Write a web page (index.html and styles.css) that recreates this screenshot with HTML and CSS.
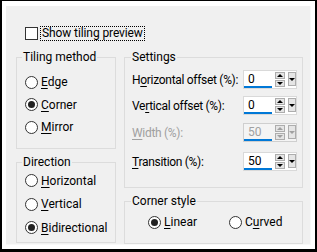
FILE: index.html
```html
<!DOCTYPE html>
<html lang="en">
<head>
  <meta charset="UTF-8" />
  <title>Tiling</title>
  <link rel="stylesheet" href="styles.css">
</head>
<body>

  <div class="panel">

    <!-- Preview toggle -->
    <div class="preview-row">
      <span class="check"></span>
      <span class="focus">Show tiling preview</span>
    </div>

    <div class="groups">

      <!-- Left side -->
      <div class="left-column">
        <fieldset class="group method">
          <legend>Tiling method</legend>
          <div class="radio"><span class="circle"></span><span><u>E</u>dge</span></div>
          <div class="radio"><span class="circle checked"></span><span><u>C</u>orner</span></div>
          <div class="radio"><span class="circle"></span><span><u>M</u>irror</span></div>
        </fieldset>

        <fieldset class="group direction">
          <legend>Direction</legend>
          <div class="radio"><span class="circle"></span><span><u>H</u>orizontal</span></div>
          <div class="radio"><span class="circle"></span><span><u>V</u>ertical</span></div>
          <div class="radio"><span class="circle checked"></span><span><u>B</u>idirectional</span></div>
        </fieldset>
      </div>

      <!-- Right side -->
      <div class="right-column">
        <fieldset class="group settings">
          <legend>Settings</legend>
          <div class="field-row">
            <label>H<u>o</u>rizontal offset (%):</label>
            <div class="spin">
              <span class="value">0</span>
              <span class="arrows"><i class="up"></i><i class="down"></i></span>
              <span class="drop"><i class="down"></i></span>
            </div>
          </div>
          <div class="field-row">
            <label>Ve<u>r</u>tical offset (%):</label>
            <div class="spin">
              <span class="value">0</span>
              <span class="arrows"><i class="up"></i><i class="down"></i></span>
              <span class="drop"><i class="down"></i></span>
            </div>
          </div>
          <div class="field-row disabled">
            <label><u>W</u>idth (%):</label>
            <div class="spin">
              <span class="value">50</span>
              <span class="arrows"><i class="up"></i><i class="down"></i></span>
              <span class="drop"><i class="down"></i></span>
            </div>
          </div>
          <div class="field-row last">
            <label><u>T</u>ransition (%):</label>
            <div class="spin">
              <span class="value">50</span>
              <span class="arrows"><i class="up"></i><i class="down"></i></span>
              <span class="drop"><i class="down"></i></span>
            </div>
          </div>
        </fieldset>

        <fieldset class="group corner">
          <legend>Corner style</legend>
          <div class="inline-radios">
            <div class="radio"><span class="circle checked"></span><span><u>L</u>inear</span></div>
            <div class="radio"><span class="circle"></span><span>C<u>u</u>rved</span></div>
          </div>
        </fieldset>
      </div>

    </div>
  </div>

</body>
</html>
```

FILE: styles.css
```css
body {
  margin: 0;
  width: 317px;
  height: 252px;
  box-sizing: border-box;
  border: 2px solid #000;
  border-top-width: 1px;
  border-bottom-width: 3px;
  padding: 5px 4px 4px 4px;
  background-color: #fff;
  font-family: Roboto, "Noto Sans", sans-serif;
  font-size: 12px;
  color: #000;
  white-space: nowrap;
}
.panel {
  height: 100%;
  box-sizing: border-box;
  background-color: #f0f0f0;
  border-right: 1px solid #f8f8f8;
  border-bottom: 1px solid #f8f8f8;
  padding: 19px 0 0 10px;
}
u {
  text-decoration-thickness: 1px;
  text-underline-offset: 2px;
}
.preview-row {
  display: flex;
  align-items: center;
  height: 16px;
  margin-left: 9px;
}
.check {
  width: 13px;
  height: 13px;
  box-sizing: border-box;
  border: 1px solid #333;
  background-color: #fff;
}
.focus {
  margin-left: 2px;
  padding: 0 1px;
  border: 1px dotted #000;
  line-height: 13px;
  letter-spacing: -0.1px;
}
.groups {
  display: flex;
  gap: 8px;
  margin-top: 9px;
}
.left-column {
  width: 100px;
  display: flex;
  flex-direction: column;
  gap: 6px;
}
.right-column {
  width: 179px;
  display: flex;
  flex-direction: column;
  gap: 6px;
}
.group {
  margin: 0;
  min-width: 0;
  box-sizing: border-box;
  border: 1px solid #dcdcdc;
  padding: 0 0 0 7px;
}
.group legend {
  padding: 0 1px;
  margin-left: -1px;
  line-height: 14px;
}
.method {
  height: 99px;
  padding-top: 7px;
  padding-left: 8px;
}
.method legend,
.direction legend {
  margin-left: -3px;
}
.direction {
  height: 88px;
  padding-left: 8px;
}
.settings {
  height: 138px;
  padding-top: 6px;
}
.corner {
  height: 50px;
  padding-top: 4px;
}
.radio {
  display: flex;
  align-items: center;
  gap: 3px;
  height: 22.5px;
}
.direction .radio {
  height: 23.5px;
}
.circle {
  width: 13px;
  height: 13px;
  box-sizing: border-box;
  border: 1px solid #333;
  border-radius: 50%;
  background-color: #fff;
  display: flex;
  align-items: center;
  justify-content: center;
}
.circle.checked::after {
  content: "";
  width: 7px;
  height: 7px;
  border-radius: 50%;
  background-color: #222;
}
.inline-radios {
  display: flex;
  margin-left: 16px;
  gap: 32px;
}
.inline-radios .radio {
  height: 20px;
}
.field-row {
  display: flex;
  align-items: center;
  height: 19px;
  margin-bottom: 7px;
}
.field-row:nth-child(3) {
  margin-bottom: 8px;
}
.field-row.disabled {
  margin-bottom: 10px;
}
.field-row label {
  width: 111px;
  letter-spacing: -0.3px;
}
.spin {
  display: flex;
  width: 54px;
  height: 19px;
  box-sizing: border-box;
  border: 1px solid #d9d9d9;
  background-color: #fff;
}
.spin .value {
  width: 29px;
  box-sizing: border-box;
  padding-left: 4px;
  border-bottom: 2px solid #0078d7;
  line-height: 16px;
}
.arrows {
  display: flex;
  flex-direction: column;
  gap: 1px;
  margin: 1px 0 0 3px;
}
.arrows i,
.drop {
  display: flex;
  align-items: center;
  justify-content: center;
  box-sizing: border-box;
  border: 1px solid #adadad;
  background-color: #e5e5e5;
}
.arrows i {
  width: 10px;
  height: 7px;
}
.drop {
  width: 8px;
  height: 14px;
  margin: 1px 0 0 3px;
}
.up::after,
.down::after {
  content: "";
  border-left: 3px solid transparent;
  border-right: 3px solid transparent;
}
.up::after {
  border-bottom: 3px solid #000;
}
.down::after {
  border-top: 3px solid #000;
}
.drop i {
  display: flex;
}
.disabled label,
.disabled .value {
  color: #a0a0a0;
}
.disabled .spin {
  background-color: #f4f4f4;
  border-color: #cfcfcf;
}
.disabled .up::after {
  border-bottom-color: #a0a0a0;
}
.disabled .down::after {
  border-top-color: #a0a0a0;
}
```
